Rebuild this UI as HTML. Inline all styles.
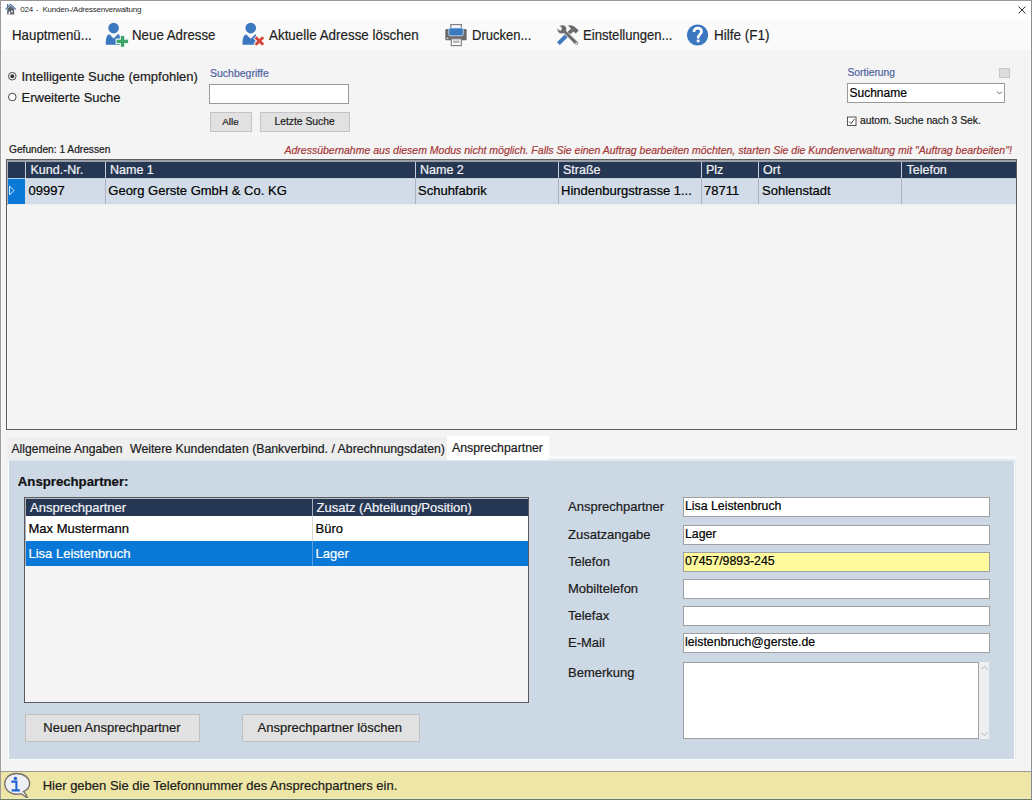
<!DOCTYPE html>
<html><head><meta charset="utf-8"><title>Kunden-/Adressenverwaltung</title>
<style>
html,body{margin:0;padding:0;}
body{width:1032px;height:800px;position:relative;overflow:hidden;background:#f4f4f4;font-family:"Liberation Sans", sans-serif;}
body>div,body>svg{position:absolute;}
.t{white-space:pre;-webkit-text-stroke:0.2px currentColor;}
</style></head><body>
<div style="left:0px;top:1px;width:1032px;height:19px;background:#ffffff;"></div>
<div style="left:1px;top:20px;width:1030px;height:30px;background:#fafafa;"></div>
<svg style="left:5px;top:3px" width="12" height="12" viewBox="0 0 12 12">
<rect x="2" y="1" width="1.2" height="3" fill="#6a6f78"/>
<path d="M0.6 6.4 L5.6 1.3 L10.8 6.4" fill="none" stroke="#4a78b0" stroke-width="1.3"/>
<path d="M2.2 6 L5.6 2.8 L9.2 6 V11.5 H2.2 Z" fill="#5a6068"/>
<rect x="3.6" y="8.6" width="1.6" height="2.9" fill="#ffffff"/>
<rect x="6" y="7.6" width="2" height="1.8" fill="#e8d8e0"/>
</svg>
<div class="t" style="left:20.3px;top:6.40px;font-size:8px;line-height:8px;color:#2a2a2a;letter-spacing:-0.2px;-webkit-text-stroke:0">024</div>
<div class="t" style="left:35.8px;top:6.40px;font-size:8px;line-height:8px;color:#2a2a2a;-webkit-text-stroke:0">-</div>
<div class="t" style="left:42.5px;top:6.40px;font-size:8px;line-height:8px;color:#2a2a2a;letter-spacing:-0.24px;-webkit-text-stroke:0">Kunden-/Adressenverwaltung</div>
<svg style="left:1018px;top:6px" width="8" height="8" viewBox="0 0 8 8"><path d="M0.5 0.5 L7.5 7.5 M7.5 0.5 L0.5 7.5" stroke="#333" stroke-width="1"/></svg>
<div class="t" style="left:12px;top:27.93px;font-size:14.2px;line-height:14.2px;color:#1e1e1e;transform:scaleX(0.9366197183098592);transform-origin:0 0;">Hauptmenü...</div>
<div class="t" style="left:132px;top:27.93px;font-size:14.2px;line-height:14.2px;color:#1e1e1e;transform:scaleX(0.9366197183098592);transform-origin:0 0;">Neue Adresse</div>
<div class="t" style="left:268.5px;top:27.93px;font-size:14.2px;line-height:14.2px;color:#1e1e1e;transform:scaleX(0.9441126760563381);transform-origin:0 0;">Aktuelle Adresse löschen</div>
<div class="t" style="left:472px;top:27.93px;font-size:14.2px;line-height:14.2px;color:#1e1e1e;transform:scaleX(0.917887323943662);transform-origin:0 0;">Drucken...</div>
<div class="t" style="left:583px;top:27.93px;font-size:14.2px;line-height:14.2px;color:#1e1e1e;transform:scaleX(0.9225704225352114);transform-origin:0 0;">Einstellungen...</div>
<div class="t" style="left:713.5px;top:27.93px;font-size:14.2px;line-height:14.2px;color:#1e1e1e;transform:scaleX(0.950669014084507);transform-origin:0 0;">Hilfe (F1)</div>
<svg style="left:102px;top:20px" width="30" height="30" viewBox="0 0 30 30">
<circle cx="11.6" cy="8.1" r="5.3" fill="#3b78c0"/>
<path d="M3.8 24.8 C3.6 19 4.5 15.5 7.2 14 L11.6 18.5 L16 14 C18.5 15.5 18.8 18 18.8 24.8 Z" fill="#3b78c0"/>
<path d="M18.9 16 h3.3 v3.7 h3.8 v3.3 h-3.8 v3.7 h-3.3 v-3.7 h-4.2 v-3.3 h4.2 Z" fill="#eaf6f0" stroke="#eaf6f0" stroke-width="2.2"/>
<path d="M18.9 16 h3.3 v3.7 h3.8 v3.3 h-3.8 v3.7 h-3.3 v-3.7 h-4.2 v-3.3 h4.2 Z" fill="#3ea56a"/>
</svg>
<svg style="left:238px;top:20px" width="30" height="30" viewBox="0 0 30 30">
<circle cx="12.75" cy="8.1" r="5.3" fill="#3b78c0"/>
<path d="M4.5 24.8 C4.3 19 5.2 15.5 8 14.2 L12.7 18.8 L17.4 14.2 C18.8 15.5 19 18 19 24.8 Z" fill="#3b78c0"/>
<path d="M17.2 16.8 L25.6 25.2 M25.6 16.8 L17.2 25.2" stroke="#fff" stroke-width="5"/>
<path d="M17.6 17.2 L25.2 24.8 M25.2 17.2 L17.6 24.8" stroke="#d4453a" stroke-width="3"/>
</svg>
<svg style="left:440px;top:20px" width="30" height="30" viewBox="0 0 30 30">
<rect x="10.8" y="4.6" width="10.6" height="5" fill="#fff" stroke="#808080" stroke-width="1.2"/>
<rect x="5.3" y="9" width="21.4" height="11.3" rx="1.2" fill="#6b6b6b"/>
<rect x="8.8" y="8" width="14.4" height="7.8" rx="1" fill="#3b78c0" stroke="#cfe2f5" stroke-width="0.8"/>
<rect x="6.5" y="17.8" width="1.8" height="1" fill="#fff"/>
<rect x="11.3" y="18.8" width="10" height="6.8" fill="#fff" stroke="#808080" stroke-width="1.2"/>
<rect x="13" y="20.5" width="6.5" height="2.6" fill="#b8b8b8"/>
</svg>
<svg style="left:552px;top:20px" width="30" height="30" viewBox="0 0 30 30">
<path d="M15.5 5.5 L19.5 4.5 L25 8.5 L26.5 12 L23.5 13.5 L21 11 L13 19" fill="none" stroke="#fff" stroke-width="0"/>
<path d="M16 5.6 C18.5 4.6 21.5 5.2 24 8 L26.8 10.5 L23.6 13.5 L21.5 11.6 L19.2 13.8 L17.2 11.8 L19.4 9.6 C18.6 8.2 17.4 6.8 16 5.6 Z" fill="#6b6b6b"/>
<path d="M19.6 10.2 L14.6 15.2" stroke="#6b6b6b" stroke-width="3.2" stroke-linecap="butt"/>
<path d="M14.2 15.8 L6.4 23.6" stroke="#3b78c0" stroke-width="4" stroke-linecap="butt"/>
<path d="M7.2 5.6 L9.6 8 L8.8 10.4 L6.4 9.6 L5.6 7 C4.6 9.5 5.4 12.5 8 13.5 C9.5 14 11 13.8 12 13.2 L23 24.5 C23.8 25.3 25.2 25.2 25.8 24.4 C26.4 23.6 26.3 22.5 25.6 21.8 L14.2 10.8 C14.8 9.6 14.8 7.8 13.8 6.4 C12.4 4.8 9.6 4.6 7.2 5.6 Z" fill="#6b6b6b" stroke="#f7f7f7" stroke-width="0.6"/>
<circle cx="24.2" cy="23.4" r="0.9" fill="#f7f7f7"/>
</svg>
<svg style="left:682px;top:20px" width="30" height="30" viewBox="0 0 30 30">
<circle cx="15.6" cy="15" r="10.6" fill="#3b78c0"/>
<path d="M11.9 11.9 C11.9 9.4 13.6 8.1 15.6 8.1 C17.8 8.1 19.5 9.4 19.5 11.6 C19.5 14.3 16.2 14.6 16.2 17.6 V18.4" fill="none" stroke="#fff" stroke-width="2.6"/>
<rect x="14.8" y="19.6" width="2.8" height="2.6" fill="#fff"/>
</svg>
<svg style="left:7px;top:71px" width="11" height="11" viewBox="0 0 11 11">
<circle cx="5.3" cy="5.2" r="3.8" fill="#fff" stroke="#333" stroke-width="0.9"/><circle cx="5.3" cy="5.2" r="2" fill="#333"/></svg>
<svg style="left:7px;top:92px" width="11" height="11" viewBox="0 0 11 11">
<circle cx="5.3" cy="5" r="3.8" fill="#fff" stroke="#333" stroke-width="0.9"/></svg>
<div class="t" style="left:21.5px;top:69.75px;font-size:13px;line-height:13px;color:#1a1a1a;">Intelligente Suche (empfohlen)</div>
<div class="t" style="left:21.5px;top:90.65px;font-size:13px;line-height:13px;color:#1a1a1a;">Erweiterte Suche</div>
<div class="t" style="left:210px;top:67.67px;font-size:10.5px;line-height:10.5px;color:#4f62a0;">Suchbegriffe</div>
<div style="left:209px;top:84px;width:140px;height:20px;background:#fff;box-sizing:border-box;border:1px solid #9a9a9a;"></div>
<div style="left:210px;top:112px;width:42px;height:20px;background:#e1e1e1;box-sizing:border-box;border:1px solid #c4c4c4;"></div>
<div class="t" style="left:222.3px;top:117.47px;font-size:9.8px;line-height:9.8px;color:#1a1a1a;">Alle</div>
<div style="left:260px;top:112px;width:90px;height:20px;background:#e1e1e1;box-sizing:border-box;border:1px solid #c4c4c4;"></div>
<div class="t" style="left:274.5px;top:117.25px;font-size:10.3px;line-height:10.3px;color:#1a1a1a;">Letzte Suche</div>
<div class="t" style="left:847.5px;top:67.95px;font-size:10.3px;line-height:10.3px;color:#4f62a0;">Sortierung</div>
<div style="left:999px;top:68px;width:11px;height:10px;background:#dcdcdc;box-sizing:border-box;border:1px solid #c8c8c8;"></div>
<div style="left:847px;top:83px;width:158px;height:20px;background:#fff;box-sizing:border-box;border:1px solid #999999;"></div>
<div class="t" style="left:849.5px;top:87.00px;font-size:12px;line-height:12px;color:#000;">Suchname</div>
<svg style="left:996px;top:90px" width="8" height="6" viewBox="0 0 8 6"><path d="M1 1.5 L3.5 4 L6 1.5" fill="none" stroke="#555" stroke-width="0.9"/></svg>
<svg style="left:847px;top:116px" width="10" height="10" viewBox="0 0 10 10">
<rect x="0.5" y="1" width="8.5" height="8.5" fill="#fff" stroke="#444" stroke-width="0.9"/><path d="M2 5.5 L4 7.5 L7.5 3" fill="none" stroke="#333" stroke-width="0.9"/></svg>
<div class="t" style="left:860px;top:115.55px;font-size:10.3px;line-height:10.3px;color:#1a1a1a;">autom. Suche nach 3 Sek.</div>
<div class="t" style="left:9px;top:144.63px;font-size:10.2px;line-height:10.2px;color:#1a1a1a;">Gefunden: 1 Adressen</div>
<div class="t" style="left:284.5px;top:144.67px;font-size:10.5px;line-height:10.5px;color:#a63838;font-style:italic;">Adressübernahme aus diesem Modus nicht möglich. Falls Sie einen Auftrag bearbeiten möchten, starten Sie die Kundenverwaltung mit "Auftrag bearbeiten"!</div>
<div style="left:6px;top:159px;width:1011px;height:271px;background:#f4f4f4;box-sizing:border-box;border:1px solid #5a5a5a;"></div>
<div style="left:7px;top:160px;width:1009px;height:2px;background:#9aa0a8;"></div>
<div style="left:7px;top:160px;width:1px;height:45px;background:#aab1bd;"></div>
<div style="left:7px;top:205px;width:1px;height:224px;background:#fafafa;"></div>
<div style="left:8px;top:162px;width:1008px;height:16px;background:#263753;"></div>
<div style="left:8px;top:178px;width:17px;height:1px;background:#a8d8f8;"></div>
<div style="left:26px;top:178px;width:990px;height:1px;background:#c8d0da;"></div>
<div style="left:8px;top:179px;width:17px;height:25px;background:#0a78d7;"></div>
<div style="left:25px;top:179px;width:991px;height:25px;background:#d1dce8;"></div>
<div style="left:8px;top:204px;width:1008px;height:1px;background:#eceef0;"></div>
<div style="left:25px;top:162px;width:1px;height:16px;background:#c4cddc;"></div>
<div style="left:105px;top:162px;width:1px;height:16px;background:#c4cddc;"></div>
<div style="left:105px;top:178px;width:1px;height:26px;background:#aab3c0;"></div>
<div style="left:415px;top:162px;width:1px;height:16px;background:#c4cddc;"></div>
<div style="left:415px;top:178px;width:1px;height:26px;background:#aab3c0;"></div>
<div style="left:558px;top:162px;width:1px;height:16px;background:#c4cddc;"></div>
<div style="left:558px;top:178px;width:1px;height:26px;background:#aab3c0;"></div>
<div style="left:701px;top:162px;width:1px;height:16px;background:#c4cddc;"></div>
<div style="left:701px;top:178px;width:1px;height:26px;background:#aab3c0;"></div>
<div style="left:758px;top:162px;width:1px;height:16px;background:#c4cddc;"></div>
<div style="left:758px;top:178px;width:1px;height:26px;background:#aab3c0;"></div>
<div style="left:901px;top:162px;width:1px;height:16px;background:#c4cddc;"></div>
<div style="left:901px;top:178px;width:1px;height:26px;background:#aab3c0;"></div>
<svg style="left:8px;top:185px" width="8" height="11" viewBox="0 0 8 11"><path d="M1.5 1 L6 5.5 L1.5 10 Z" fill="none" stroke="#d8ecff" stroke-width="1"/></svg>
<div class="t" style="left:30.5px;top:163.88px;font-size:12.5px;line-height:12.5px;color:#f2f4f8;">Kund.-Nr.</div>
<div class="t" style="left:110px;top:163.88px;font-size:12.5px;line-height:12.5px;color:#f2f4f8;">Name 1</div>
<div class="t" style="left:420px;top:163.88px;font-size:12.5px;line-height:12.5px;color:#f2f4f8;">Name 2</div>
<div class="t" style="left:563px;top:163.88px;font-size:12.5px;line-height:12.5px;color:#f2f4f8;">Straße</div>
<div class="t" style="left:706px;top:163.88px;font-size:12.5px;line-height:12.5px;color:#f2f4f8;">Plz</div>
<div class="t" style="left:763px;top:163.88px;font-size:12.5px;line-height:12.5px;color:#f2f4f8;">Ort</div>
<div class="t" style="left:906.5px;top:163.88px;font-size:12.5px;line-height:12.5px;color:#f2f4f8;">Telefon</div>
<div class="t" style="left:28.5px;top:184.15px;font-size:13px;line-height:13px;color:#000;">09997</div>
<div class="t" style="left:108.3px;top:184.15px;font-size:13px;line-height:13px;color:#000;">Georg Gerste GmbH &amp; Co. KG</div>
<div class="t" style="left:418px;top:184.15px;font-size:13px;line-height:13px;color:#000;">Schuhfabrik</div>
<div class="t" style="left:561px;top:184.15px;font-size:13px;line-height:13px;color:#000;">Hindenburgstrasse 1...</div>
<div class="t" style="left:704px;top:184.15px;font-size:13px;line-height:13px;color:#000;">78711</div>
<div class="t" style="left:762px;top:184.15px;font-size:13px;line-height:13px;color:#000;">Sohlenstadt</div>
<div style="left:7px;top:437px;width:118px;height:23px;background:#eeeeee;"></div>
<div style="left:126px;top:437px;width:321px;height:23px;background:#eeeeee;"></div>
<div style="left:447px;top:436px;width:102px;height:25px;background:#ffffff;"></div>
<div class="t" style="left:11.5px;top:442.71px;font-size:12.1px;line-height:12.1px;color:#1a1a1a;">Allgemeine Angaben</div>
<div class="t" style="left:130px;top:442.55px;font-size:12.3px;line-height:12.3px;color:#1a1a1a;">Weitere Kundendaten (Bankverbind. / Abrechnungsdaten)</div>
<div class="t" style="left:452px;top:442.25px;font-size:12.3px;line-height:12.3px;color:#1a1a1a;">Ansprechpartner</div>
<div style="left:548px;top:456px;width:468px;height:3px;background:#f9fafb;"></div>
<div style="left:8px;top:459px;width:1007px;height:301px;background:#cdd8e5;box-sizing:border-box;border:1px solid #fafcfe;border-top:2px solid #e4e9ef;"></div>
<div style="left:1015px;top:459px;width:1px;height:300px;background:#e6e8ea;"></div>
<div style="left:447px;top:459px;width:102px;height:1px;background:#ffffff;"></div>
<div class="t" style="left:17.8px;top:474.98px;font-size:13.2px;line-height:13.2px;color:#111;font-weight:bold;">Ansprechpartner:</div>
<div style="left:24px;top:497px;width:505px;height:206px;background:#f4f4f4;box-sizing:border-box;border:1px solid #5a5a5a;"></div>
<div style="left:25px;top:498px;width:503px;height:1px;background:#b8bec8;"></div>
<div style="left:25px;top:498px;width:1px;height:68px;background:#aab1bd;"></div>
<div style="left:25px;top:566px;width:1px;height:136px;background:#fafafa;"></div>
<div style="left:26px;top:499px;width:502px;height:17px;background:#263753;"></div>
<div style="left:26px;top:516px;width:502px;height:25px;background:#ffffff;"></div>
<div style="left:26px;top:541px;width:502px;height:25px;background:#0a78d7;"></div>
<div style="left:312px;top:499px;width:1px;height:17px;background:#a8b0bc;"></div>
<div style="left:312px;top:516px;width:1px;height:25px;background:#d8d8d8;"></div>
<div style="left:312px;top:541px;width:1px;height:25px;background:#5a9ee0;"></div>
<div class="t" style="left:30px;top:501.25px;font-size:13px;line-height:13px;color:#f2f4f8;">Ansprechpartner</div>
<div class="t" style="left:316.5px;top:501.25px;font-size:13px;line-height:13px;color:#f2f4f8;">Zusatz (Abteilung/Position)</div>
<div class="t" style="left:28.5px;top:521.95px;font-size:13px;line-height:13px;color:#000;">Max Mustermann</div>
<div class="t" style="left:315.5px;top:521.95px;font-size:13px;line-height:13px;color:#000;">Büro</div>
<div class="t" style="left:28.5px;top:547.45px;font-size:13px;line-height:13px;color:#fff;">Lisa Leistenbruch</div>
<div class="t" style="left:315.5px;top:547.45px;font-size:13px;line-height:13px;color:#fff;">Lager</div>
<div style="left:25px;top:714px;width:175px;height:28px;background:#e1e1e1;box-sizing:border-box;border:1px solid #c0c0c0;"></div>
<div class="t" style="left:43.3px;top:720.95px;font-size:13px;line-height:13px;color:#1a1a1a;">Neuen Ansprechpartner</div>
<div style="left:242px;top:714px;width:178px;height:28px;background:#e1e1e1;box-sizing:border-box;border:1px solid #c0c0c0;"></div>
<div class="t" style="left:257.5px;top:720.95px;font-size:13px;line-height:13px;color:#1a1a1a;">Ansprechpartner löschen</div>
<div class="t" style="left:568px;top:500.45px;font-size:13px;line-height:13px;color:#1a1a1a;">Ansprechpartner</div>
<div style="left:683px;top:497px;width:307px;height:20px;background:#ffffff;box-sizing:border-box;border:1px solid #a0a0a0;"></div>
<div class="t" style="left:685px;top:499.85px;font-size:12.3px;line-height:12.3px;color:#000;">Lisa Leistenbruch</div>
<div class="t" style="left:568px;top:528.45px;font-size:13px;line-height:13px;color:#1a1a1a;">Zusatzangabe</div>
<div style="left:683px;top:525px;width:307px;height:20px;background:#ffffff;box-sizing:border-box;border:1px solid #a0a0a0;"></div>
<div class="t" style="left:685px;top:527.84px;font-size:12.3px;line-height:12.3px;color:#000;">Lager</div>
<div class="t" style="left:568px;top:555.45px;font-size:13px;line-height:13px;color:#1a1a1a;">Telefon</div>
<div style="left:683px;top:552px;width:307px;height:20px;background:#fffa9e;box-sizing:border-box;border:1px solid #a0a0a0;"></div>
<div class="t" style="left:685px;top:554.84px;font-size:12.3px;line-height:12.3px;color:#000;">07457/9893-245</div>
<div class="t" style="left:568px;top:582.45px;font-size:13px;line-height:13px;color:#1a1a1a;">Mobiltelefon</div>
<div style="left:683px;top:579px;width:307px;height:20px;background:#ffffff;box-sizing:border-box;border:1px solid #a0a0a0;"></div>
<div class="t" style="left:568px;top:609.45px;font-size:13px;line-height:13px;color:#1a1a1a;">Telefax</div>
<div style="left:683px;top:606px;width:307px;height:20px;background:#ffffff;box-sizing:border-box;border:1px solid #a0a0a0;"></div>
<div class="t" style="left:568px;top:636.45px;font-size:13px;line-height:13px;color:#1a1a1a;">E-Mail</div>
<div style="left:683px;top:633px;width:307px;height:20px;background:#ffffff;box-sizing:border-box;border:1px solid #a0a0a0;"></div>
<div class="t" style="left:685px;top:635.84px;font-size:12.3px;line-height:12.3px;color:#000;">leistenbruch@gerste.de</div>
<div class="t" style="left:568px;top:666.05px;font-size:13px;line-height:13px;color:#1a1a1a;">Bemerkung</div>
<div style="left:683px;top:662px;width:296px;height:77px;background:#fff;box-sizing:border-box;border:1px solid #a0a0a0;"></div>
<div style="left:979px;top:662px;width:10px;height:77px;background:#eeeff1;"></div>
<svg style="left:980px;top:665px" width="9" height="6" viewBox="0 0 9 6"><path d="M1.5 4.5 L4.5 1.5 L7.5 4.5" fill="none" stroke="#b0b0b0" stroke-width="1"/></svg>
<svg style="left:980px;top:731px" width="9" height="6" viewBox="0 0 9 6"><path d="M1.5 1.5 L4.5 4.5 L7.5 1.5" fill="none" stroke="#b0b0b0" stroke-width="1"/></svg>
<div style="left:1px;top:771px;width:1030px;height:1px;background:#a09a8c;"></div>
<div style="left:1px;top:772px;width:1030px;height:26px;background:#eee6a6;"></div>
<svg style="left:2px;top:771px" width="30" height="29" viewBox="0 0 30 29">
<path d="M21.5 20.6 C25.5 18.8 27.6 16 27.6 12.8 C27.6 6.6 22 2.5 14.5 2.5 C7.5 2.5 2.8 6.8 2.8 12.8 C2.8 18.8 8 23.2 14.5 23.2 C16.2 23.2 17.6 23 18.8 22.6 C21.5 23.8 23.8 25.6 25.8 27.6 C25 24.8 23.4 22.3 21.5 20.6 Z" fill="#eef0f6" stroke="#77716b" stroke-width="1.4"/>
<circle cx="13.4" cy="7.4" r="1.7" fill="#1f63d4"/>
<path d="M9.3 10.6 H14.4 V18.5 M9.6 19.4 H17.8" fill="none" stroke="#1f63d4" stroke-width="2.1"/>
</svg>
<div class="t" style="left:42.7px;top:779.05px;font-size:13px;line-height:13px;color:#1a1a1a;">Hier geben Sie die Telefonnummer des Ansprechpartners ein.</div>
<div style="left:0px;top:0px;width:1032px;height:1px;background:#989898;"></div>
<div style="left:0px;top:0px;width:1px;height:800px;background:#9c9c9c;"></div>
<div style="left:1px;top:20px;width:1px;height:751px;background:#fbfbfb;"></div>
<div style="left:1030px;top:20px;width:1px;height:751px;background:#fbfbfb;"></div>
<div style="left:1031px;top:0px;width:1px;height:800px;background:#8a8e92;"></div>
<div style="left:1px;top:798px;width:1030px;height:1px;background:#e6ebc4;"></div>
<div style="left:0px;top:799px;width:1032px;height:1px;background:#6d7a5e;"></div>
</body></html>
